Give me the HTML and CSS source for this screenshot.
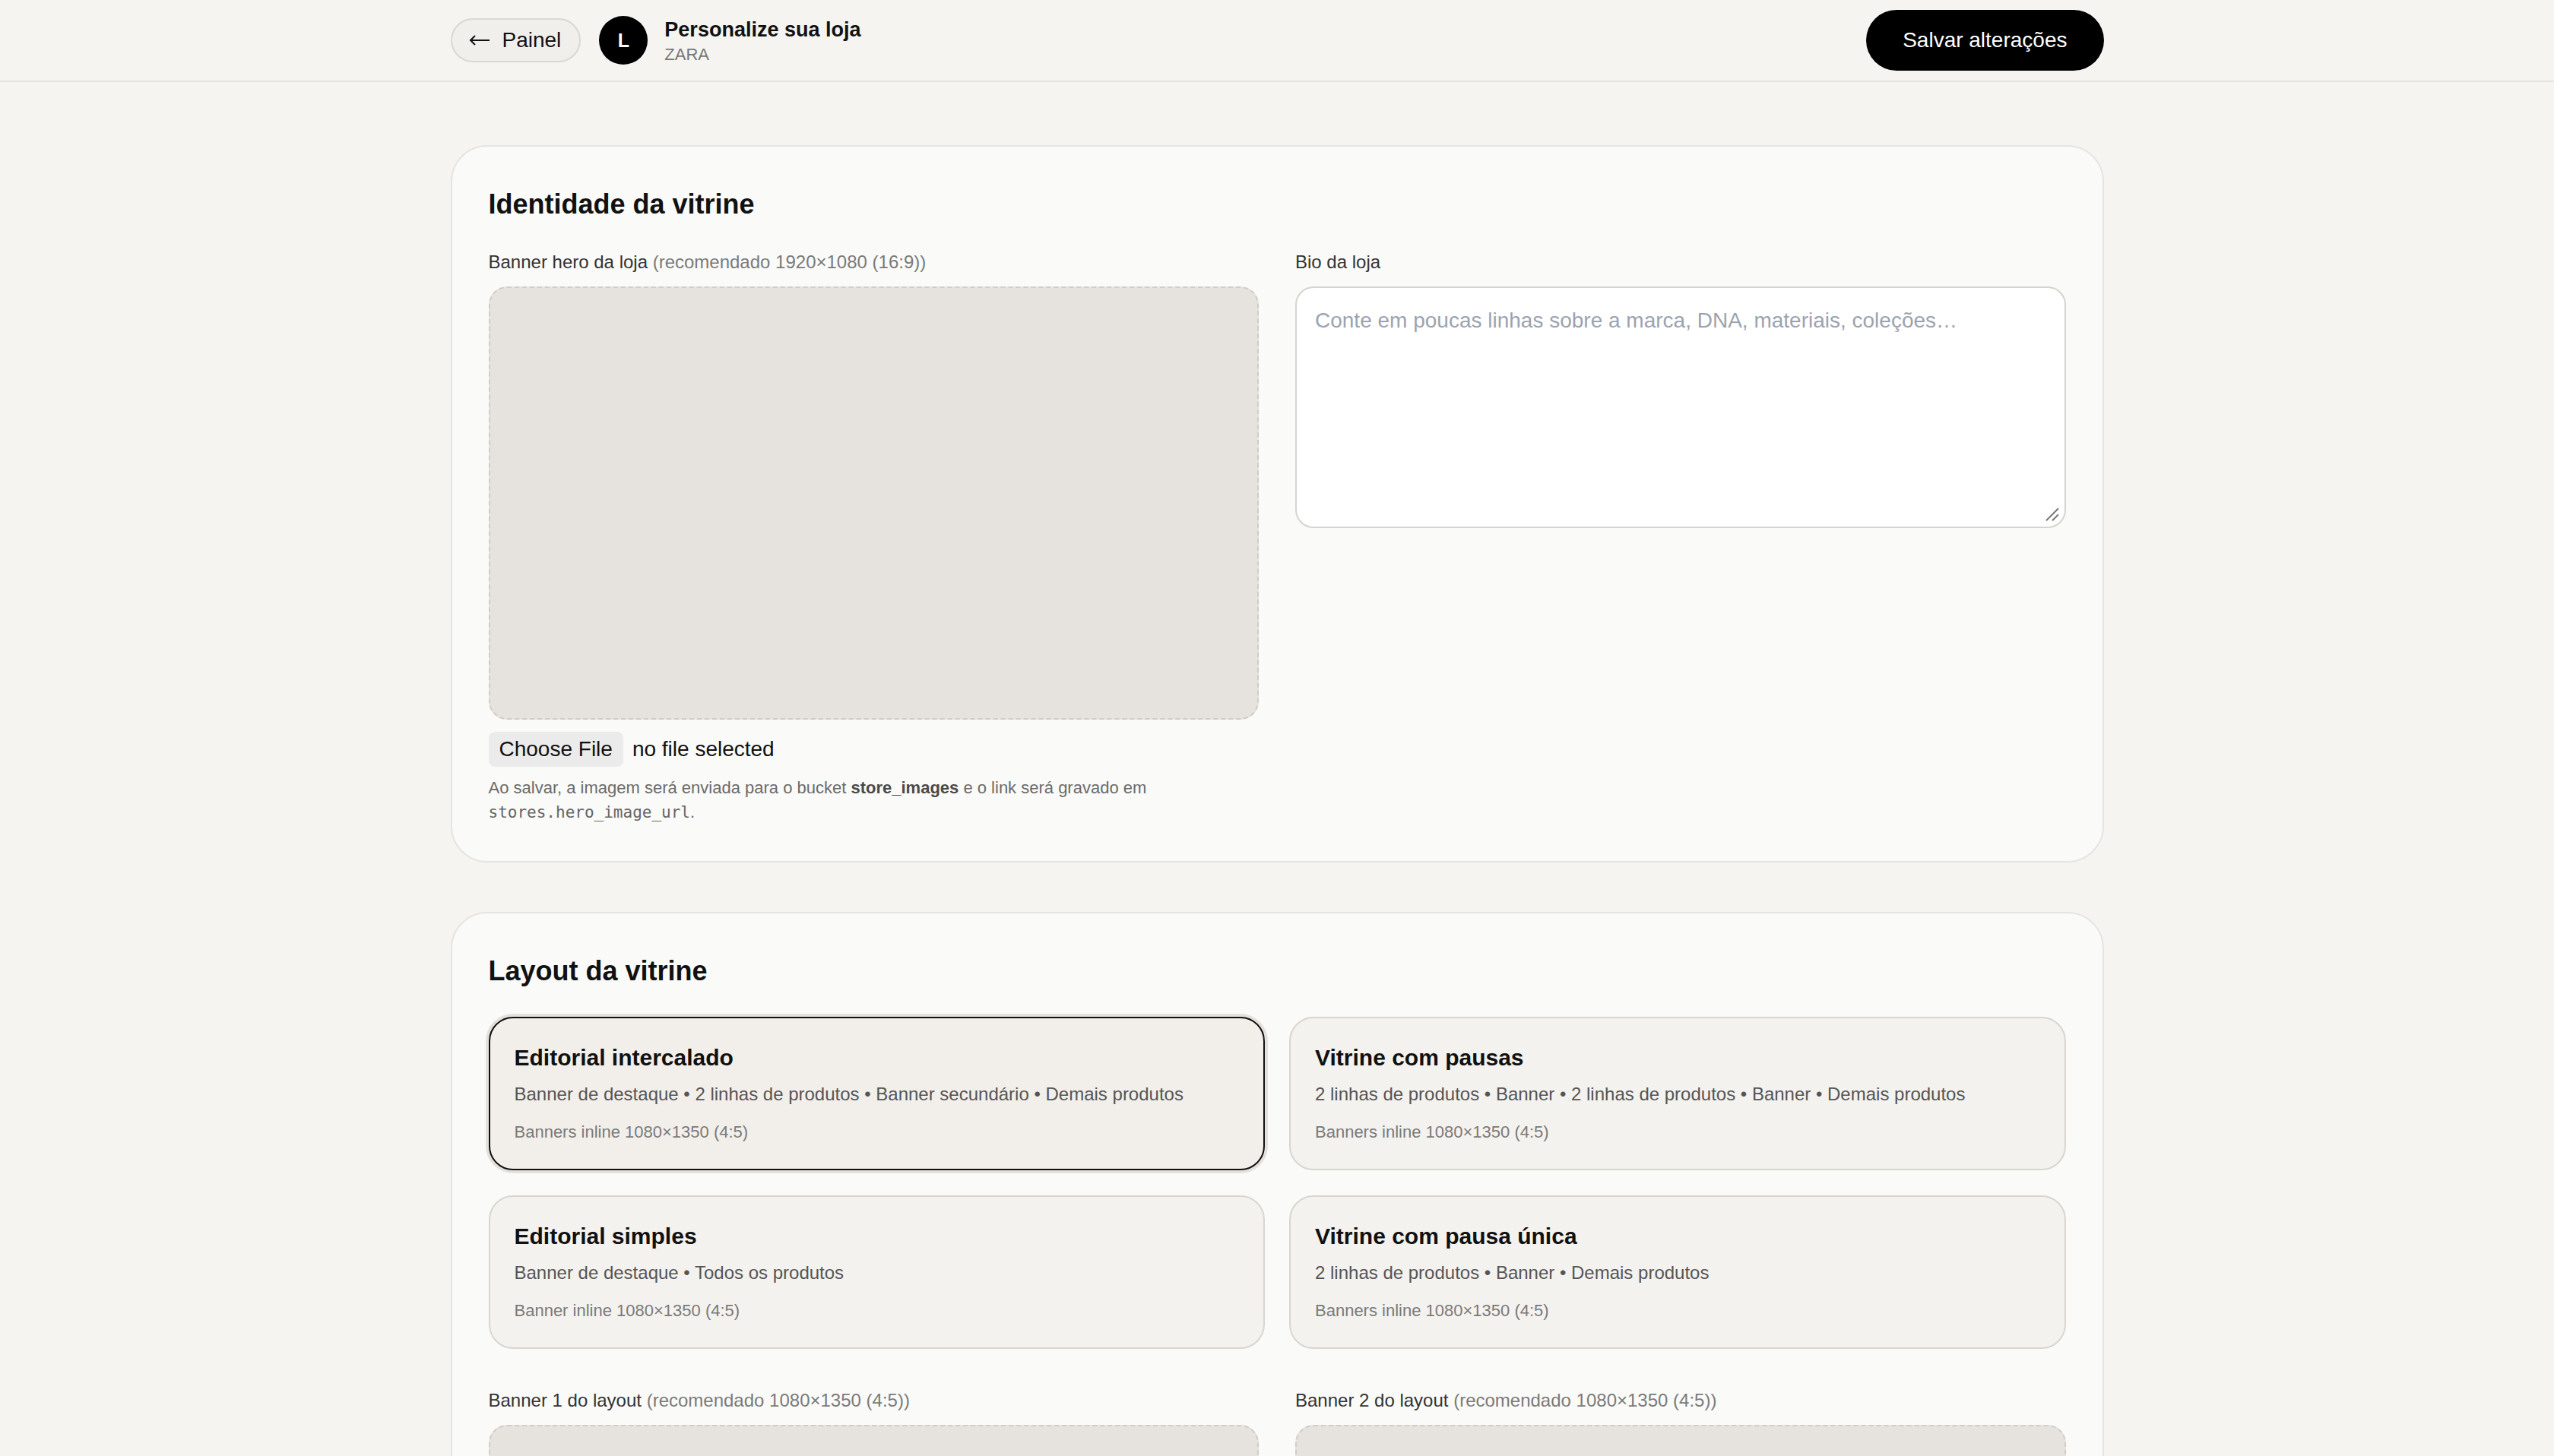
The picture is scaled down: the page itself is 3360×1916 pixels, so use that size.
FILE: index.html
```html
<!DOCTYPE html>
<html lang="pt-BR">
<head>
    <meta charset="UTF-8">
    <meta name="viewport" content="width=device-width, initial-scale=1.0">
    <title>Personalize sua loja</title>
    <link rel="stylesheet" href="styles.css">
</head>
<body>
    <header class="topbar">
        <div class="wrap topbar-inner">
            <div class="topbar-left">
                <a class="back" href="#">
                    <svg class="arrow" width="28" height="16" viewBox="0 0 28 16">
                        <line x1="2" y1="8" x2="27" y2="8" stroke="#111" stroke-width="2"/>
                        <polyline points="8,2 2,8 8,14" fill="none" stroke="#111" stroke-width="2"/>
                    </svg>
                    <span>Painel</span>
                </a>
                <div class="avatar">L</div>
                <div class="store">
                    <div class="store-title">Personalize sua loja</div>
                    <div class="store-name">ZARA</div>
                </div>
            </div>
            <button class="save">Salvar alterações</button>
        </div>
    </header>

    <main class="wrap page">
        <section class="card">
            <h2 class="card-title">Identidade da vitrine</h2>
            <div class="cols">
                <div class="field">
                    <div class="label">Banner hero da loja <span class="hint">(recomendado 1920×1080 (16:9))</span></div>
                    <div class="drop drop-hero"></div>
                    <div class="file">
                        <span class="file-btn">Choose File</span>
                        <span class="file-name">no file selected</span>
                    </div>
                    <p class="help">Ao salvar, a imagem será enviada para o bucket <b>store_images</b> e o link será gravado em <code>stores.hero_image_url</code>.</p>
                </div>
                <div class="field">
                    <div class="label">Bio da loja</div>
                    <div class="bio">
                        <textarea class="bio-text" placeholder="Conte em poucas linhas sobre a marca, DNA, materiais, coleções…"></textarea>
                        <svg class="grip" width="20" height="20" viewBox="0 0 20 20">
                            <line x1="19" y1="3" x2="3" y2="19" stroke="#777" stroke-width="2"/>
                            <line x1="19" y1="11" x2="11" y2="19" stroke="#777" stroke-width="2"/>
                        </svg>
                    </div>
                </div>
            </div>
        </section>

        <section class="card">
            <h2 class="card-title">Layout da vitrine</h2>
            <div class="options">
                <div class="option selected">
                    <div class="option-title">Editorial intercalado</div>
                    <div class="option-desc">Banner de destaque • 2 linhas de produtos • Banner secundário • Demais produtos</div>
                    <div class="option-note">Banners inline 1080×1350 (4:5)</div>
                </div>
                <div class="option">
                    <div class="option-title">Vitrine com pausas</div>
                    <div class="option-desc">2 linhas de produtos • Banner • 2 linhas de produtos • Banner • Demais produtos</div>
                    <div class="option-note">Banners inline 1080×1350 (4:5)</div>
                </div>
                <div class="option">
                    <div class="option-title">Editorial simples</div>
                    <div class="option-desc">Banner de destaque • Todos os produtos</div>
                    <div class="option-note">Banner inline 1080×1350 (4:5)</div>
                </div>
                <div class="option">
                    <div class="option-title">Vitrine com pausa única</div>
                    <div class="option-desc">2 linhas de produtos • Banner • Demais produtos</div>
                    <div class="option-note">Banners inline 1080×1350 (4:5)</div>
                </div>
            </div>
            <div class="cols banners">
                <div class="field">
                    <div class="label">Banner 1 do layout <span class="hint">(recomendado 1080×1350 (4:5))</span></div>
                    <div class="drop drop-tall"></div>
                </div>
                <div class="field">
                    <div class="label">Banner 2 do layout <span class="hint">(recomendado 1080×1350 (4:5))</span></div>
                    <div class="drop drop-tall"></div>
                </div>
            </div>
        </section>
    </main>
</body>
</html>
```

FILE: styles.css
```css
*{
    margin: 0;
    padding: 0;
    box-sizing: border-box;
}
body{
    background: #f5f4f1;
    color: #111;
    font-family: "Liberation Sans", Arial, sans-serif;
}
.wrap{
    width: 2175px;
    margin: 0 auto;
}

/* top bar */
.topbar{
    border-bottom: 2px solid #e5e3df;
}
.topbar-inner{
    height: 106px;
    display: flex;
    align-items: center;
    justify-content: space-between;
}
.topbar-left{
    display: flex;
    align-items: center;
}
.back{
    display: flex;
    align-items: center;
    gap: 16px;
    height: 58px;
    padding: 0 24px 0 22px;
    border: 2px solid #dad8d4;
    border-radius: 999px;
    background: #f1efeb;
    color: #111;
    font-size: 28px;
    text-decoration: none;
}
.back .arrow{
    display: block;
}
.avatar{
    width: 64px;
    height: 64px;
    margin-left: 24px;
    border-radius: 50%;
    background: #000;
    color: #fff;
    font-size: 25px;
    font-weight: bold;
    display: flex;
    align-items: center;
    justify-content: center;
}
.store{
    margin-left: 22px;
    padding-top: 2px;
}
.store-title{
    font-size: 27px;
    line-height: 36px;
    font-weight: bold;
}
.store-name{
    font-size: 22px;
    line-height: 30px;
    color: #777;
}
.save{
    height: 80px;
    padding: 0 48px;
    border: none;
    border-radius: 999px;
    background: #000;
    color: #fff;
    font-family: inherit;
    font-size: 28px;
}

/* cards */
.page{
    padding-top: 83px;
}
.card{
    background: #fafaf8;
    border: 2px solid #e6e4e0;
    border-radius: 48px;
    padding: 48px;
    margin-bottom: 65px;
}
.card-title{
    font-size: 36px;
    line-height: 56px;
    font-weight: bold;
    margin-bottom: 32px;
}
.cols{
    display: grid;
    grid-template-columns: 1fr 1fr;
    gap: 48px;
    align-items: start;
}
.label{
    font-size: 24px;
    line-height: 32px;
    color: #333;
    margin-bottom: 16px;
}
.hint{
    color: #7a7a7a;
}
.drop{
    background: #e6e2dd;
    border: 2px dashed #d0ccc7;
    border-radius: 24px;
}
.drop-hero{
    aspect-ratio: 16 / 9;
}
.drop-tall{
    aspect-ratio: 4 / 5;
}
.file{
    display: flex;
    align-items: center;
    gap: 12px;
    margin-top: 16px;
    font-size: 28px;
}
.file-btn{
    background: #ebebeb;
    border-radius: 8px;
    padding: 6px 14px;
    line-height: 34px;
}
.help{
    margin-top: 12px;
    font-size: 22px;
    line-height: 32px;
    color: #6b6b6b;
}
.help b{
    color: #4a4a4a;
}
.help code{
    font-family: "DejaVu Sans Mono", "Liberation Mono", monospace;
    font-size: 21px;
    color: #666;
}
.bio{
    position: relative;
}
.bio-text{
    display: block;
    width: 100%;
    height: 318px;
    padding: 23px 24px;
    border: 2px solid #d6d3cf;
    border-radius: 24px;
    background: #fff;
    font-family: inherit;
    font-size: 28px;
    line-height: 40px;
    resize: none;
    outline: none;
}
.bio-text::placeholder{
    color: #9ca3af;
}
.grip{
    position: absolute;
    right: 9px;
    bottom: 9px;
}

/* layout options */
.options{
    display: grid;
    grid-template-columns: 1fr 1fr;
    gap: 33px 32px;
}
.option{
    background: #f4f2ee;
    border: 2px solid #d9d6d1;
    border-radius: 32px;
    padding: 32px;
}
.option.selected{
    background: #f2efeb;
    border-color: #111;
    box-shadow: 0 0 0 4px #e4e1dc;
}
.option-title{
    font-size: 30px;
    line-height: 40px;
    font-weight: bold;
}
.option-desc{
    margin-top: 8px;
    font-size: 24px;
    line-height: 40px;
    color: #555;
}
.option-note{
    margin-top: 14px;
    font-size: 22px;
    line-height: 32px;
    color: #7a7a7a;
}
.banners{
    margin-top: 52px;
}
```
